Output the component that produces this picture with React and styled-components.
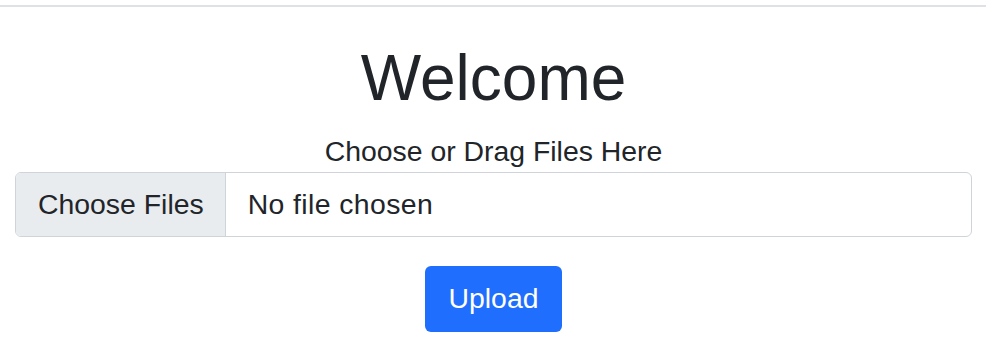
import React from 'react';
import styled, { createGlobalStyle } from 'styled-components';

const GlobalStyle = createGlobalStyle`
    body {
        margin: 0;
        background: #fff;
        color: #212529;
        font-family: "Liberation Sans", Arial, sans-serif;
    }
`;

const Divider = styled.hr`
    margin: 5px 0 0;
    height: 2px;
    border: 0;
    background: #dee2e6;
`;

const Page = styled.main`
    padding: 0 14px 0 15px;
    display: flex;
    flex-direction: column;
    align-items: center;
`;

const Title = styled.h1`
    margin: 33px 0 0;
    font-size: 64px;
    font-weight: 400;
    line-height: 1.2;
`;

const Hint = styled.p`
    margin: 13px 0 0;
    font-size: 28.4px;
    line-height: 42px;
`;

const FileField = styled.label`
    align-self: stretch;
    display: flex;
    height: 65px;
    box-sizing: border-box;
    border: 1px solid #ced4da;
    border-radius: 6px;
    overflow: hidden;
    font-size: 28.4px;
    cursor: pointer;
`;

const PickButton = styled.span`
    display: flex;
    align-items: center;
    padding: 0 21px 0 22px;
    background: #e9ecef;
    border-right: 1px solid #ced4da;
`;

const FileName = styled.span`
    display: flex;
    align-items: center;
    padding: 0 22px;
    letter-spacing: 0.4px;
`;

const UploadButton = styled.button`
    margin-top: 29px;
    height: 66px;
    padding: 0 24px;
    border: 0;
    border-radius: 6px;
    background: #1f6efd;
    color: #fff;
    font-family: inherit;
    font-size: 28.4px;
    cursor: pointer;
`;

function App () {
    return (
        <>
            <GlobalStyle />
            <Divider />
            <Page>
                <Title>Welcome</Title>
                <Hint>Choose or Drag Files Here</Hint>
                <FileField>
                    <PickButton>Choose Files</PickButton>
                    <FileName>No file chosen</FileName>
                </FileField>
                <UploadButton type="button">Upload</UploadButton>
            </Page>
        </>
    )
}

export default App
